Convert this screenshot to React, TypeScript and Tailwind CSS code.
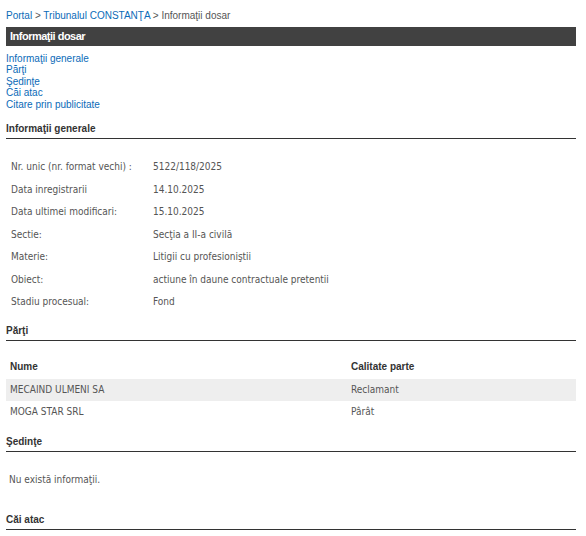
import React from "react";

const rows: [string, string][] = [
  ["Nr. unic (nr. format vechi) :", "5122/118/2025"],
  ["Data inregistrarii", "14.10.2025"],
  ["Data ultimei modificari:", "15.10.2025"],
  ["Sectie:", "Secţia a II-a civilă"],
  ["Materie:", "Litigii cu profesioniştii"],
  ["Obiect:", "actiune în daune contractuale pretentii"],
  ["Stadiu procesual:", "Fond"],
];

const arial = { fontFamily: '"Liberation Sans", Arial, sans-serif' };

function SectionHeader({ title }: { title: string }) {
  return (
    <div
      className="ml-[6px] mr-[10px] border-b border-[#333] pb-[2px] text-[10px] font-bold leading-[14px] text-[#333]"
      style={arial}
    >
      {title}
    </div>
  );
}

export default function App() {
  const body = { fontFamily: '"DejaVu Sans Condensed", "DejaVu Sans", Verdana, sans-serif' };
  return (
    <div className="w-[586px] h-[536px] overflow-hidden bg-white" style={body}>
      <div className="pl-[6px] pt-[9px] text-[10px] leading-[13px] text-[#555]" style={arial}>
        <span className="text-[#0b6bb8]">Portal</span>
        <span> &gt; </span>
        <span className="text-[#0b6bb8]">Tribunalul CONSTANŢA</span>
        <span> &gt; Informaţii dosar</span>
      </div>
      <div
        className="ml-[6px] mr-[10px] mt-[5px] h-[19px] bg-[#414141] px-[4px] text-[11px] font-bold leading-[19px] tracking-[-0.5px] text-white"
        style={arial}
      >
        Informaţii dosar
      </div>
      <div className="mt-[7px] flex flex-col pl-[6px] text-[10px] leading-[11.3px] text-[#0b6bb8]" style={arial}>
        <span>Informaţii generale</span>
        <span>Părţi</span>
        <span>Şedinţe</span>
        <span>Căi atac</span>
        <span className="mt-[1px]">Citare prin publicitate</span>
      </div>
      <div className="mt-[12px]">
        <SectionHeader title="Informaţii generale" />
      </div>
      <div className="mt-[16px] flex flex-col pl-[11px] text-[10px] text-[#555]">
        {rows.map(([l, v]) => (
          <div key={l} className="flex h-[22.5px] items-center">
            <span className="w-[142px] shrink-0">{l}</span>
            <span>{v}</span>
          </div>
        ))}
      </div>
      <div className="mt-[11px]">
        <SectionHeader title="Părţi" />
      </div>
      <div className="ml-[6px] mr-[10px] mt-[14px] text-[10px]">
        <div className="flex h-[24px] items-center font-bold text-[#333]" style={arial}>
          <span className="w-[345px] pl-[4px]">Nume</span>
          <span>Calitate parte</span>
        </div>
        <div className="flex h-[22px] items-center bg-[#eeeeee] text-[#555]">
          <span className="w-[345px] pl-[4px]">MECAIND ULMENI SA</span>
          <span>Reclamant</span>
        </div>
        <div className="flex h-[22px] items-center text-[#555]">
          <span className="w-[345px] pl-[4px]">MOGA STAR SRL</span>
          <span>Pârât</span>
        </div>
      </div>
      <div className="mt-[12px]">
        <SectionHeader title="Şedinţe" />
      </div>
      <div className="mt-[20px] pl-[9px] text-[10px] text-[#555]">Nu există informaţii.</div>
      <div className="mt-[26px]">
        <SectionHeader title="Căi atac" />
      </div>
    </div>
  );
}
